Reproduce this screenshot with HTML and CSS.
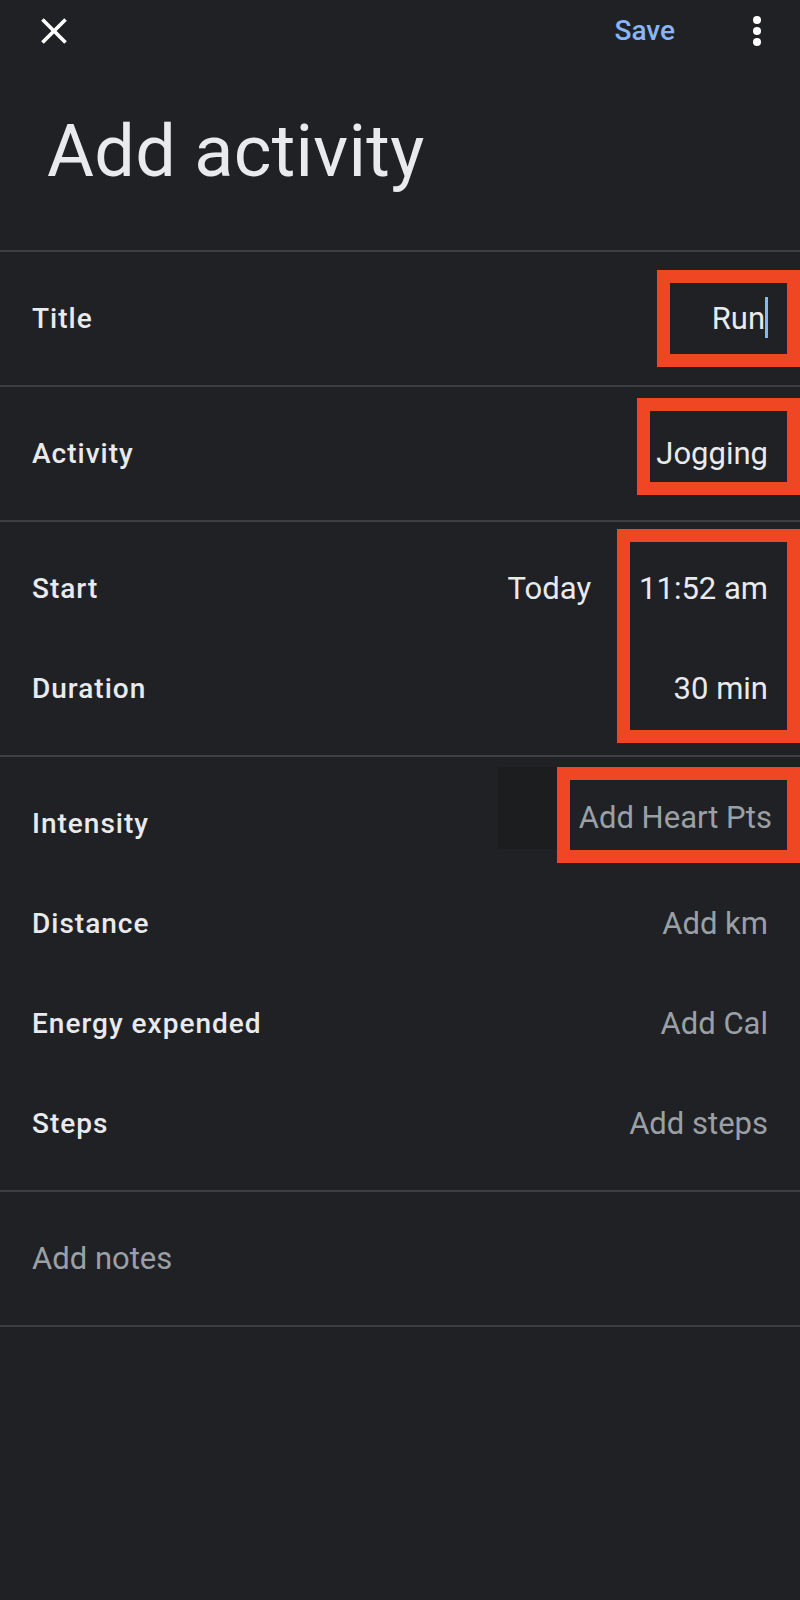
FILE: index.html
```html
<!DOCTYPE html>
<html lang="en">
<head>
    <meta charset="UTF-8">
    <meta name="viewport" content="width=device-width, initial-scale=1.0">
    <title>Add activity</title>
    <link rel="stylesheet" href="styles.css">
</head>
<body>
    <div class="screen">
        <header class="toolbar">
            <button class="icon-btn" aria-label="Close">
                <svg width="44" height="44" viewBox="0 0 24 24"><path fill="#ffffff" d="M19 6.41L17.59 5 12 10.59 6.41 5 5 6.41 10.59 12 5 17.59 6.41 19 12 13.41 17.59 19 19 17.59 13.41 12z"/></svg>
            </button>
            <span class="spacer"></span>
            <button class="save">Save</button>
            <button class="more" aria-label="More options"><span></span><span></span><span></span></button>
        </header>

        <h1 class="page-title">Add activity</h1>

        <section class="group">
            <div class="field">
                <span class="label">Title</span>
                <span class="value">Run<span class="caret"></span></span>
                <span class="mark mark-title"></span>
            </div>
        </section>

        <section class="group">
            <div class="field">
                <span class="label">Activity</span>
                <span class="value">Jogging</span>
                <span class="mark mark-activity"></span>
            </div>
        </section>

        <section class="group">
            <div class="field">
                <span class="label">Start</span>
                <div class="values">
                    <span class="value">Today</span>
                    <span class="value">11:52 am</span>
                </div>
            </div>
            <div class="field">
                <span class="label">Duration</span>
                <span class="value">30 min</span>
            </div>
            <span class="mark mark-time"></span>
        </section>

        <section class="group">
            <div class="field">
                <span class="label">Intensity</span>
                <span class="value empty heart">Add Heart Pts</span>
                <span class="shade"></span>
                <span class="mark mark-intensity"></span>
            </div>
            <div class="field">
                <span class="label">Distance</span>
                <span class="value empty">Add km</span>
            </div>
            <div class="field">
                <span class="label">Energy expended</span>
                <span class="value empty">Add Cal</span>
            </div>
            <div class="field">
                <span class="label">Steps</span>
                <span class="value empty">Add steps</span>
            </div>
        </section>

        <section class="group">
            <div class="field">
                <span class="value empty">Add notes</span>
            </div>
        </section>
    </div>
</body>
</html>
```

FILE: styles.css
```css
body {
    margin: 0;
    padding: 0;
    background-color: #202124;
    font-family: Roboto, "Liberation Sans", sans-serif;
    color: #e8eaed;
}
.screen {
    width: 800px;
    min-height: 1600px;
}

/* top bar */
.toolbar {
    display: flex;
    align-items: center;
    height: 62px;
    padding: 0 39px 0 32px;
}
.toolbar button {
    background: none;
    border: none;
    padding: 0;
    cursor: pointer;
}
.icon-btn svg {
    display: block;
}
.spacer {
    flex: 1;
}
.save {
    font-family: Roboto, "Liberation Sans", sans-serif;
    font-size: 28px;
    font-weight: 500;
    line-height: 62px;
    color: #8ab4f8;
    margin-right: 78px;
}
.more {
    display: flex;
    flex-direction: column;
    gap: 3px;
    width: 8px;
}
.more span {
    width: 8px;
    height: 8px;
    border-radius: 50%;
    background-color: #ffffff;
}

.page-title {
    margin: 0;
    padding: 54px 47px 62px;
    font-size: 72px;
    font-weight: 400;
    line-height: 72px;
    letter-spacing: 0.3px;
    color: #e8eaed;
}

/* form groups */
.group {
    position: relative;
    border-top: 2px solid #3c3e42;
    padding: 16px 0 17px;
}
.group:last-child {
    border-bottom: 2px solid #3c3e42;
}
.field {
    position: relative;
    display: flex;
    align-items: center;
    justify-content: space-between;
    height: 100px;
    padding: 0 32px;
}
.label {
    font-size: 28px;
    font-weight: 500;
    letter-spacing: 1px;
    color: #e8eaed;
}
.values {
    display: flex;
    gap: 48px;
}
.value {
    font-size: 31px;
    color: #e8eaed;
}
.value.empty {
    color: #9aa0a6;
}
.value.heart {
    margin: 0 -4px 12px 0;
}
.caret {
    display: inline-block;
    width: 3px;
    height: 41px;
    margin: -4px 0 -4px 0;
    vertical-align: -5px;
    background-color: #8ab4f8;
}

/* red highlight boxes over the fields */
.mark {
    position: absolute;
    right: 0;
    box-sizing: border-box;
    border: 13px solid #ef4623;
}
.mark-title {
    top: 2px;
    width: 143px;
    height: 97px;
}
.mark-activity {
    top: -5px;
    width: 163px;
    height: 97px;
}
.mark-time {
    top: 7px;
    width: 183px;
    height: 214px;
}
.mark-intensity {
    top: -6px;
    width: 243px;
    height: 96px;
}
.shade {
    position: absolute;
    top: -6px;
    right: 243px;
    width: 59px;
    height: 82px;
    background-color: #1c1d1f;
}
```
